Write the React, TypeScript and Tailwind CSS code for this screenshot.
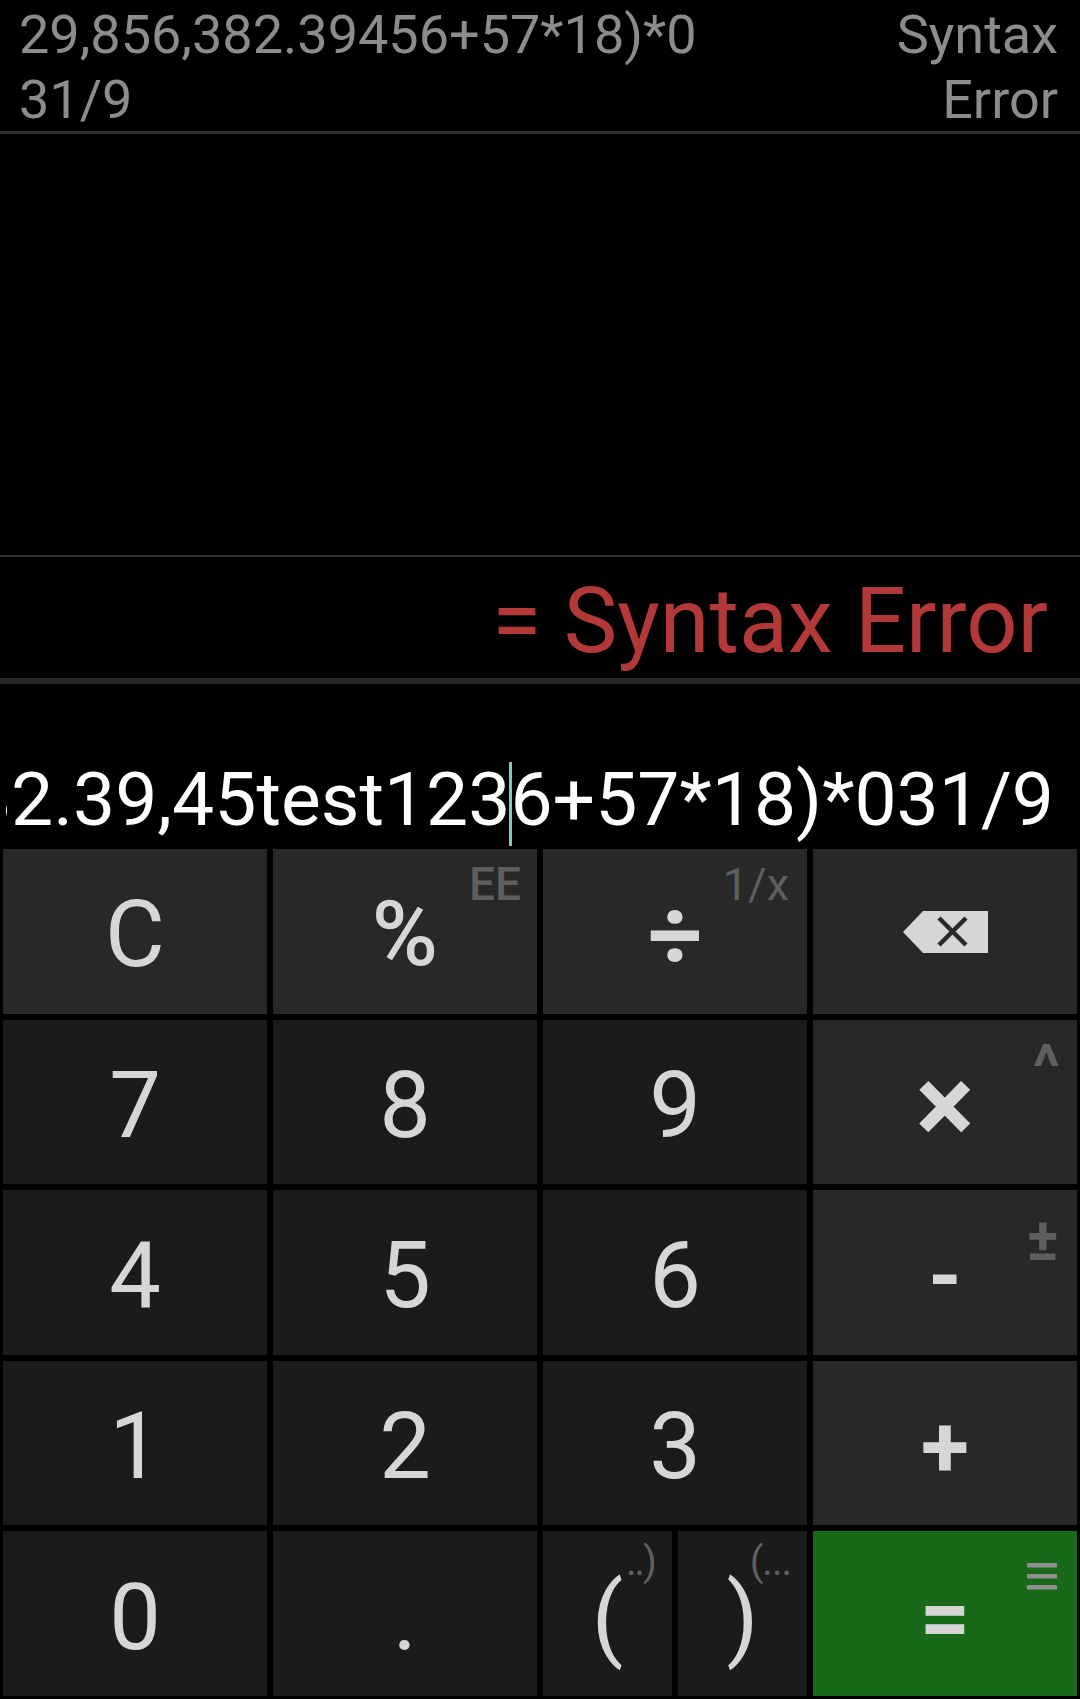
import React from "react"

function Key({
  children,
  tone = "digit",
  sup,
}: {
  children: React.ReactNode
  tone?: "digit" | "func" | "eq"
  sup?: React.ReactNode
}) {
  const bg =
    tone === "digit" ? "bg-[#1b1b1b]" : tone === "func" ? "bg-[#282828]" : "bg-[#186a18]"
  return (
    <div className={`relative flex items-center justify-center pt-[8px] text-[#d6d6d6] ${bg}`}>
      {children}
      {sup}
    </div>
  )
}

function Digit({ v }: { v: string }) {
  return (
    <Key>
      <span className="text-[92px] leading-none">{v}</span>
    </Key>
  )
}

function Backspace() {
  return (
    <svg width="85" height="42" viewBox="0 0 85 42" className="mb-[6px]">
      <polygon points="0,21 20,0 85,0 85,42 20,42" fill="#d6d6d6" />
      <path d="M36 7 L63 34 M63 7 L36 34" stroke="#282828" strokeWidth="4.5" />
    </svg>
  )
}

export default function App() {
  return (
    <div className="flex h-[1699px] w-[1080px] flex-col overflow-hidden bg-black font-['Roboto',sans-serif]">
      {/* history */}
      <div className="flex h-[131px] pl-[19px] pr-[22px] pt-[2px] text-[54px] leading-[65px] text-[#8c8c8c]">
        <div className="w-[690px] break-all">29,856,382.39456+57*18)*031/9</div>
        <div className="ml-auto w-[170px] text-right">Syntax Error</div>
      </div>
      <div className="h-[3px] bg-[#2e2e2e]" />

      <div className="h-[421px]" />
      <div className="h-[2px] bg-[#333333]" />

      {/* result */}
      <div className="flex h-[121px] justify-end pr-[32px] pt-[20px] text-[90px] leading-none text-[#b33939]">
        = Syntax Error
      </div>
      <div className="h-[6px] bg-[#282828]" />

      {/* input */}
      <div className="flex h-[162px] pl-[6px] pr-[26px] pt-[78px] text-[75px] leading-none text-white">
        <div className="flex flex-1 justify-end overflow-hidden whitespace-nowrap">
          <span>
            <span className="relative">
              29,856,382.39,45test123
              <span className="absolute right-[-2px] top-[-9px] h-[101px] w-[3px] bg-[#7fcbc4]" />
            </span>
            6+57*18)*031/9
          </span>
        </div>
      </div>

      {/* keypad */}
      <div className="grid h-[853px] grid-cols-4 grid-rows-5 gap-[6px] p-[3px]">
        <Key tone="func">
          <span className="text-[92px] leading-none">C</span>
        </Key>
        <Key
          tone="func"
          sup={
            <span className="absolute right-[16px] top-[12px] text-[46px] font-medium leading-none text-[#5e5e5e]">
              EE
            </span>
          }
        >
          <span className="text-[90px] font-medium leading-none">%</span>
        </Key>
        <Key
          tone="func"
          sup={
            <span className="absolute right-[18px] top-[13px] text-[45px] leading-none text-[#5e5e5e]">
              1/x
            </span>
          }
        >
          <span className="text-[96px] font-bold leading-none">÷</span>
        </Key>
        <Key tone="func">
          <Backspace />
        </Key>

        <Digit v="7" />
        <Digit v="8" />
        <Digit v="9" />
        <Key
          tone="func"
          sup={
            <span className="absolute right-[17px] top-[16px] text-[62px] font-bold leading-none text-[#5e5e5e]">
              ^
            </span>
          }
        >
          <span className="text-[110px] font-bold leading-none">×</span>
        </Key>

        <Digit v="4" />
        <Digit v="5" />
        <Digit v="6" />
        <Key
          tone="func"
          sup={
            <span className="absolute right-[18px] top-[20px] text-[60px] font-bold leading-none text-[#5e5e5e]">
              ±
            </span>
          }
        >
          <span className="text-[85px] font-bold leading-none">-</span>
        </Key>

        <Digit v="1" />
        <Digit v="2" />
        <Digit v="3" />
        <Key tone="func">
          <span className="text-[88px] font-bold leading-none">+</span>
        </Key>

        <Digit v="0" />
        <Digit v="." />
        <div className="grid grid-cols-2 gap-[6px]">
          <Key
            sup={
              <span className="absolute right-[17px] top-[11px] text-[40px] leading-none tracking-[-2px] text-[#5e5e5e]">
                ..)
              </span>
            }
          >
            <span className="text-[92px] leading-none">(</span>
          </Key>
          <Key
            sup={
              <span className="absolute right-[16px] top-[11px] text-[40px] leading-none tracking-[-1px] text-[#5e5e5e]">
                (...
              </span>
            }
          >
            <span className="text-[92px] leading-none">)</span>
          </Key>
        </div>
        <Key
          tone="eq"
          sup={
            <svg width="30" height="27" viewBox="0 0 30 27" className="absolute right-[20px] top-[32px]">
              <rect x="0" y="0" width="30" height="4.5" fill="#8f8f8f" />
              <rect x="0" y="11" width="30" height="4.5" fill="#8f8f8f" />
              <rect x="0" y="22" width="30" height="4.5" fill="#8f8f8f" />
            </svg>
          }
        >
          <span className="text-[88px] font-bold leading-none">=</span>
        </Key>
      </div>
    </div>
  )
}
